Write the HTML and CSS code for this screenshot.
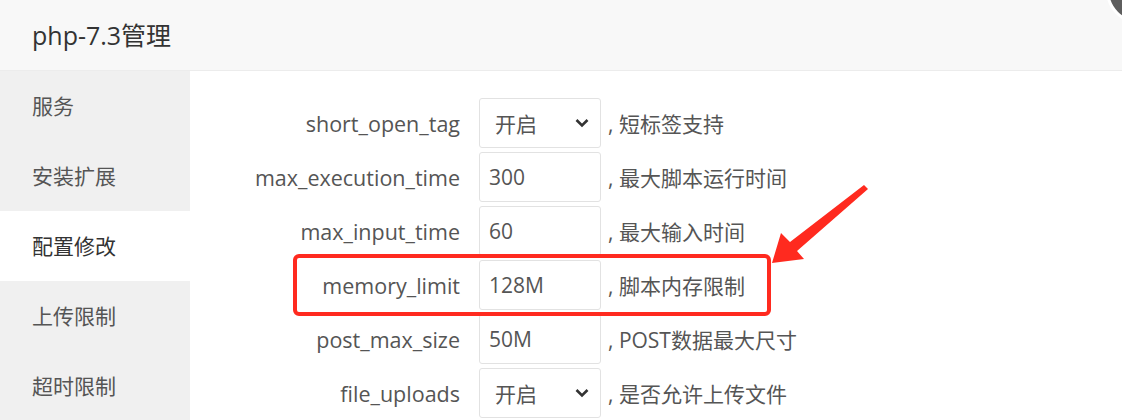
FILE: index.html
```html
<!DOCTYPE html>
<html lang="zh-CN">
<head>
<meta charset="utf-8">
<title>php-7.3管理</title>
<link rel="stylesheet" href="styles.css">
</head>
<body>
<div class="page">
  <div class="header">php-7.3管理</div>
  <div class="close-btn"></div>
  <div class="main">
    <ul class="sidebar">
      <li class="nav-item">服务</li>
      <li class="nav-item">安装扩展</li>
      <li class="nav-item active">配置修改</li>
      <li class="nav-item">上传限制</li>
      <li class="nav-item">超时限制</li>
    </ul>
    <div class="content">
      <div class="row">
        <span class="label">short_open_tag</span>
        <div class="box select"><span>开启</span>
          <svg class="chev" width="14" height="10" viewBox="0 0 14 10"><path d="M1.5 2 L7 7.5 L12.5 2" fill="none" stroke="#333" stroke-width="2.6"/></svg>
        </div>
        <span class="note">, 短标签支持</span>
      </div>
      <div class="row">
        <span class="label">max_execution_time</span>
        <div class="box">300</div>
        <span class="note">, 最大脚本运行时间</span>
      </div>
      <div class="row">
        <span class="label">max_input_time</span>
        <div class="box">60</div>
        <span class="note">, 最大输入时间</span>
      </div>
      <div class="row">
        <span class="label">memory_limit</span>
        <div class="box">128M</div>
        <span class="note">, 脚本内存限制</span>
      </div>
      <div class="row">
        <span class="label">post_max_size</span>
        <div class="box">50M</div>
        <span class="note">, POST数据最大尺寸</span>
      </div>
      <div class="row">
        <span class="label">file_uploads</span>
        <div class="box select"><span>开启</span>
          <svg class="chev" width="14" height="10" viewBox="0 0 14 10"><path d="M1.5 2 L7 7.5 L12.5 2" fill="none" stroke="#333" stroke-width="2.6"/></svg>
        </div>
        <span class="note">, 是否允许上传文件</span>
      </div>
    </div>
  </div>
  <div class="highlight"></div>
  <svg class="arrow" width="1122" height="420" viewBox="0 0 1122 420">
    <polygon points="772,263 781,233 790,242 864,185 868,189 797,251 804,259" fill="#ff2a1f"/>
  </svg>
</div>
</body>
</html>
```

FILE: styles.css
```css
* { box-sizing: border-box; }
html, body { margin: 0; padding: 0; background: #fff; }
body {
  width: 1122px;
  height: 420px;
  overflow: hidden;
  font-family: "Open Sans", "Noto Sans CJK SC", sans-serif;
  color: #555;
}
.page {
  position: relative;
  width: 1122px;
  height: 420px;
  overflow: hidden;
}
.header {
  height: 71px;
  background: #f8f8f8;
  border-bottom: 1px solid #ececec;
  padding-left: 32px;
  line-height: 70px;
  font-size: 25px;
  color: #333;
}
.close-btn {
  position: absolute;
  left: 1106px;
  top: -44px;
  width: 68px;
  height: 68px;
  border-radius: 50%;
  background: #5e5e5e;
  border: 3px solid #fff;
}
.main {
  display: flex;
  height: 349px;
}
.sidebar {
  list-style: none;
  margin: 0;
  padding: 0;
  width: 190px;
  background: #f0f0f0;
}
.nav-item {
  height: 70px;
  line-height: 70px;
  padding-left: 32px;
  font-size: 21px;
  color: #555;
}
.nav-item.active { background: #fff; color: #333; }
.content {
  flex: 1;
  padding-top: 27px;
  display: flex;
  flex-direction: column;
  gap: 4px;
}
.row {
  display: flex;
  align-items: center;
  height: 50px;
  font-size: 21px;
}
.label {
  width: 270px;
  text-align: right;
  margin-right: 19px;
  font-size: 21.5px;
  color: #555;
}
.box {
  width: 122px;
  height: 50px;
  border: 1px solid #e2e2e2;
  border-radius: 3px;
  padding-left: 9px;
  display: flex;
  align-items: center;
  color: #555;
}
.box.select {
  padding-left: 15px;
  padding-right: 11px;
  justify-content: space-between;
}
.chev { display: block; }
.note {
  margin-left: 7px;
  color: #555;
}
.highlight {
  position: absolute;
  left: 293px;
  top: 254px;
  width: 478px;
  height: 62px;
  border: 4px solid #ff2a1f;
  border-radius: 6px;
}
.arrow {
  position: absolute;
  left: 0;
  top: 0;
}
```
